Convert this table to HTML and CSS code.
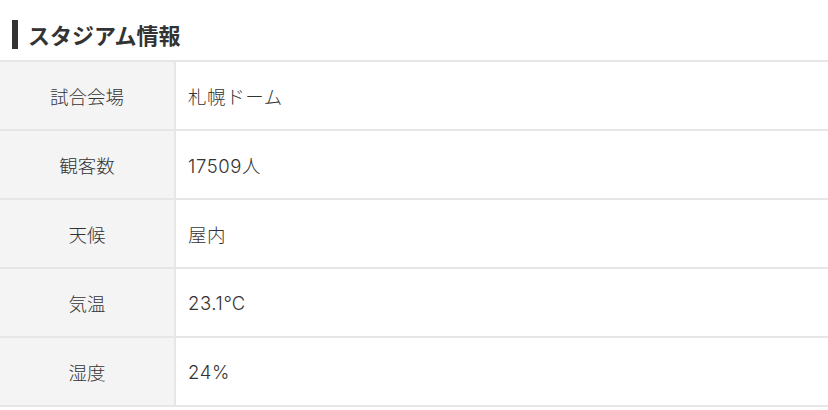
FILE: index.html
```html
<!DOCTYPE html>
<html lang="ja">
<head>
<meta charset="utf-8">
<link rel="stylesheet" href="styles.css">
</head>
<body>
<section class="stadium">
  <h2 class="stadium-title">スタジアム情報</h2>
  <table class="info-table">
    <tbody>
      <tr><th>試合会場</th><td>札幌ドーム</td></tr>
      <tr><th>観客数</th><td>17509人</td></tr>
      <tr><th>天候</th><td>屋内</td></tr>
      <tr><th>気温</th><td>23.1℃</td></tr>
      <tr><th>湿度</th><td>24%</td></tr>
    </tbody>
  </table>
</section>
</body>
</html>
```

FILE: styles.css
```css
html, body {
  margin: 0;
  padding: 0;
  background: #fff;
}
body {
  font-family: "Noto Sans CJK JP", "Noto Sans", sans-serif;
  color: #333;
}
.stadium {
  padding-top: 20px;
}
.stadium-title {
  margin: 0 0 11px 12px;
  padding-left: 10px;
  border-left: 6px solid #333;
  height: 29px;
  line-height: 29px;
  font-size: 22px;
  font-weight: bold;
  color: #333;
  letter-spacing: 0;
}
.info-table {
  width: 100%;
  border-collapse: collapse;
  border-top: 2px solid #e6e6e6;
}
.info-table tr {
  border-bottom: 2px solid #e6e6e6;
}
.info-table th,
.info-table td {
  height: 67px;
  padding: 0;
  font-family: "Inter", "Noto Sans CJK JP", sans-serif;
  font-size: 18.5px;
  font-weight: 300;
  color: #333;
  vertical-align: middle;
}
.info-table th {
  width: 174px;
  background: #f4f4f4;
  text-align: center;
  border-right: 2px solid #e6e6e6;
}
.info-table td {
  text-align: left;
  padding-left: 12px;
  letter-spacing: 0.6px;
}
```
